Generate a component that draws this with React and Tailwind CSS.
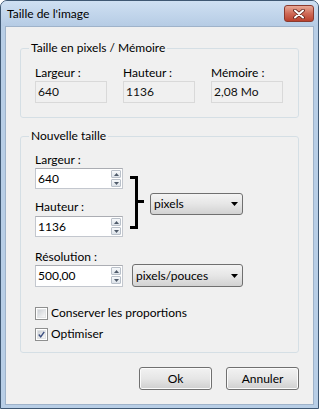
import React from "react";

const font = { fontFamily: 'Lato, "Noto Sans", "Liberation Sans", sans-serif' };

// read-only field of the first group (greyed box)
const InfoField = ({ label, value }) => (
  <div className="flex flex-col w-[72px]">
    <span className="leading-4 h-4">{label}</span>
    <div className="h-[22px] border border-[#d9d9d9] bg-[#f0f0f0] pl-[2px] flex items-center leading-4 text-[#111]">
      {value}
    </div>
  </div>
);

const Arrow = ({ up }) => (
  <svg width="5" height="3" viewBox="0 0 5 3">
    <path d={up ? "M0 3 L2.5 0 L5 3 Z" : "M0 0 L2.5 3 L5 0 Z"} fill="#4f5b6a" />
  </svg>
);

const SpinInput = ({ value, h = "h-[21px]" }) => (
  <div className={`w-[88px] ${h} bg-white border border-[#c3c7ce] border-t-[#abadb3] flex items-center justify-between pl-[2px] pr-[1px]`}>
    <span className="leading-4">{value}</span>
    <div className="flex flex-col gap-[1px]">
      <div className="w-[10px] h-[8px] border border-[#b9c0c9] rounded-[1px] bg-gradient-to-b from-[#f7f9fb] to-[#dde3ea] flex items-center justify-center">
        <Arrow up />
      </div>
      <div className="w-[10px] h-[8px] border border-[#b9c0c9] rounded-[1px] bg-gradient-to-b from-[#f7f9fb] to-[#dde3ea] flex items-center justify-center">
        <Arrow />
      </div>
    </div>
  </div>
);

const Select = ({ value, className }) => (
  <div className={`${className} border border-[#707070] rounded-[3px] bg-gradient-to-b from-[#f4f4f4] via-[#e6e6e6] to-[#d2d2d2] flex items-center justify-between pl-[3px] pr-[4px]`}>
    <span className="leading-4">{value}</span>
    <svg width="7" height="4" viewBox="0 0 7 4">
      <path d="M0 0 L7 0 L3.5 4 Z" fill="#000" />
    </svg>
  </div>
);

const Checkbox = ({ checked, label, className }) => (
  <div className={`${className} flex items-center h-4`}>
    <div className="w-[13px] h-[13px] border border-[#8e8f8f] bg-white p-[1px]">
      <div className="w-full h-full bg-gradient-to-br from-[#cdd1d6] to-[#f7f7f7] border border-[#e2e4e6] flex items-center justify-center">
        {checked && (
          <svg width="9" height="9" viewBox="0 0 9 9">
            <path d="M1 4.5 L3.5 7.5 L8 1" stroke="#3c4f80" strokeWidth="1.8" fill="none" />
          </svg>
        )}
      </div>
    </div>
    <span className="ml-[3px] leading-4">{label}</span>
  </div>
);

const Button = ({ children }) => (
  <button className="w-[73px] h-[23px] border border-[#707070] rounded-[3px] bg-gradient-to-b from-[#f2f2f2] via-[#e6e6e6] to-[#cfcfcf] shadow-[inset_0_0_0_1px_#fbfbfb] leading-4 text-black">
    {children}
  </button>
);

export default function App() {
  return (
    <div style={font} className="w-[319px] h-[409px] border border-[#3f5873] rounded-t-[7px] bg-[#b8cee6] flex flex-col text-[12px] text-black overflow-hidden">
      {/* title bar */}
      <div className="h-[25px] shrink-0 flex items-start justify-between bg-gradient-to-b from-[#cfe0f2] to-[#b6cce5]">
        <span className="pl-[6px] pt-[5px] leading-4">Taille de l'image</span>
        <div className="mt-[4px] mr-[4px] w-[30px] h-[17px] rounded-[3px] border border-[#8a3a2e] bg-gradient-to-b from-[#e7a997] via-[#cf6a57] to-[#b9402c] flex items-center justify-center">
          <svg width="12" height="10" viewBox="0 0 12 10">
            <path d="M2 1.5 L10 8.5 M10 1.5 L2 8.5" stroke="#5a1e16" strokeWidth="3.6" strokeLinecap="round" />
            <path d="M2 1.5 L10 8.5 M10 1.5 L2 8.5" stroke="#fff" strokeWidth="2" strokeLinecap="round" />
          </svg>
        </div>
      </div>

      {/* client area */}
      <div className="flex-1 ml-[4px] mr-[4px] mb-[3px] bg-[#f0f0f0] border border-[#9fb3ca] flex flex-col">
        <fieldset className="mt-[13px] mx-[14px] border border-[#d5dfe5] rounded-[3px] px-[14px] pb-[14px]">
          <legend className="-ml-[6px] px-[2px] leading-4">Taille en pixels / Mémoire</legend>
          <div className="mt-[9px] flex gap-[16px]">
            <InfoField label="Largeur :" value="640" />
            <InfoField label="Hauteur :" value="1136" />
            <InfoField label="Mémoire :" value="2,08 Mo" />
          </div>
        </fieldset>

        <fieldset className="mt-[10px] mx-[14px] border border-[#d5dfe5] rounded-[3px] px-[14px] pb-[10px]">
          <legend className="-ml-[6px] px-[2px] leading-4">Nouvelle taille</legend>

          <div className="mt-[8px] flex items-start">
            <div className="flex flex-col">
              <span className="leading-4 h-4">Largeur :</span>
              <SpinInput value="640" />
              <span className="mt-[10px] leading-4 h-4">Hauteur :</span>
              <div className="mt-[1px]">
                <SpinInput value="1136" />
              </div>
            </div>
            <svg className="ml-[7px] mt-[24px]" width="14" height="53" viewBox="0 0 14 53">
              <rect x="0" y="0" width="8" height="3" fill="#000" />
              <rect x="5" y="0" width="3" height="53" fill="#000" />
              <rect x="0" y="50" width="8" height="3" fill="#000" />
              <rect x="8" y="24" width="6" height="3" fill="#000" />
            </svg>
            <Select value="pixels" className="ml-[6px] mt-[41px] w-[93px] h-[22px]" />
          </div>

          <div className="mt-[12px] leading-[15px] h-[15px]">Résolution :</div>
          <div className="flex items-center">
            <SpinInput value="500,00" h="h-[22px]" />
            <Select value="pixels/pouces" className="ml-[9px] w-[111px] h-[23px]" />
          </div>

          <Checkbox className="mt-[18px]" label="Conserver les proportions" />
          <Checkbox className="mt-[5px]" checked label="Optimiser" />
        </fieldset>

        <div className="mt-[14px] mr-[14px] flex justify-end gap-[14px]">
          <Button>Ok</Button>
          <Button>Annuler</Button>
        </div>
      </div>
    </div>
  );
}
